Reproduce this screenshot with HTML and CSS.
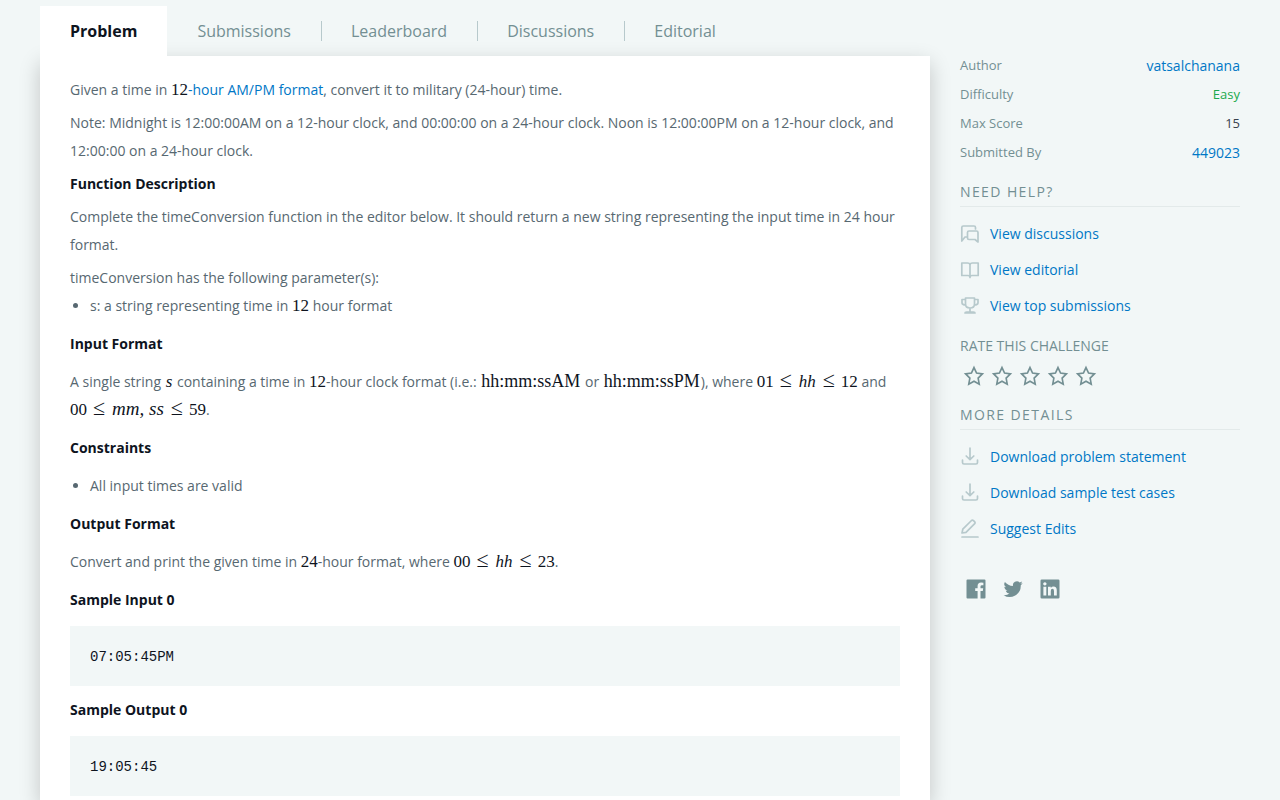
FILE: index.html
```html
<!DOCTYPE html>
<html lang="en">
<head>
<meta charset="utf-8">
<title>Time Conversion</title>
<link rel="stylesheet" href="styles.css">
</head>
<body>
<svg class="sprite" aria-hidden="true">
  <symbol id="star" viewBox="0 0 24 24"><path d="M12 2.8l2.8 6 6.4.9-4.7 4.6 1.2 6.6-5.7-3.2-5.7 3.2 1.2-6.6L2.800 9.700l6.400-.9z"/></symbol>
  <symbol id="download" viewBox="0 0 20 20"><path d="M10 1v11.500M6.200 9l3.800 3.600L13.800 9M2.500 13v2.500q0 1.500 1.500 1.500h12q1.500 0 1.500-1.500V13"/></symbol>
</svg>
<div class="page">
  <main class="challenge">
    <nav class="tabs">
      <a class="tab active" href="#">Problem</a>
      <a class="tab" href="#"><span>Submissions</span></a>
      <a class="tab" href="#"><span>Leaderboard</span></a>
      <a class="tab" href="#"><span>Discussions</span></a>
      <a class="tab" href="#"><span>Editorial</span></a>
    </nav>
    <article class="card">
      <section class="statement">
        <p>Given a time in <a href="#"><span class="math">12</span>-hour AM/PM format</a>, convert it to military (24-hour) time.</p>
        <p>Note: Midnight is 12:00:00AM on a 12-hour clock, and 00:00:00 on a 24-hour clock. Noon is 12:00:00PM on a 12-hour clock, and 12:00:00 on a 24-hour clock.</p>
        <h2>Function Description</h2>
        <p>Complete the timeConversion function in the editor below. It should return a new string representing the input time in 24 hour format.</p>
        <div>
          <p>timeConversion has the following parameter(s):</p>
          <ul><li>s: a string representing time in <span class="math">12</span> hour format</li></ul>
        </div>
      </section>
      <h2>Input Format</h2>
      <p>A single string <span class="math"><i>s</i></span> containing a time in <span class="math">12</span>-hour clock format (i.e.: <span class="math word">hh:mm:ssAM</span> or <span class="math word">hh:mm:ssPM</span>), where <span class="math">01<span class="rel">≤</span><i>hh</i><span class="rel">≤</span>12</span> and <span class="math">00<span class="rel">≤</span><i class="wide">mm, ss</i><span class="rel">≤</span>59</span>.</p>
      <h2>Constraints</h2>
      <ul><li>All input times are valid</li></ul>
      <h2>Output Format</h2>
      <p>Convert and print the given time in <span class="math">24</span>-hour format, where <span class="math">00<span class="rel">≤</span><i>hh</i><span class="rel">≤</span>23</span>.</p>
      <h2>Sample Input 0</h2>
      <pre>07:05:45PM</pre>
      <h2>Sample Output 0</h2>
      <pre>19:05:45</pre>
    </article>
  </main>
  <aside class="sidebar">
    <dl class="facts">
      <div><dt>Author</dt><dd><a href="#">vatsalchanana</a></dd></div>
      <div><dt>Difficulty</dt><dd class="easy">Easy</dd></div>
      <div><dt>Max Score</dt><dd>15</dd></div>
      <div><dt>Submitted By</dt><dd><a href="#">449023</a></dd></div>
    </dl>
    <h3>NEED HELP?</h3>
    <ul class="links">
      <li><a href="#"><svg viewBox="0 0 20 20"><path d="M7 13H5l-3.200 4V3.500Q1.800 2 3.300 2H14q1.500 0 1.500 1.500V5M9 7h7.500Q18 7 18 8.500V18l-3-2.500H9Q7.500 15.500 7.500 14V8.500Q7.500 7 9 7z"/></svg>View discussions</a></li>
      <li><a href="#"><svg viewBox="0 0 20 20"><path d="M10 5q0-2-2.500-2H1.800v12.500H8q2 0 2 2 0-2 2-2h6.200V3h-5.700Q10 3 10 5v12.500"/></svg>View editorial</a></li>
      <li><a href="#"><svg viewBox="0 0 20 20"><path d="M5.500 2h9v6q0 4-4.500 4T5.500 8zM5.500 3.500H2v3.200Q2 9 5.800 9M14.500 3.500H18v3.200Q18 9 14.200 9M10 12v4.500M5 17q0-1 1.500-1h7q1.500 0 1.500 1z"/></svg>View top submissions</a></li>
    </ul>
    <h4>RATE THIS CHALLENGE</h4>
    <div class="stars">
      <button type="button" aria-label="1 star"><svg><use href="#star"/></svg></button>
      <button type="button" aria-label="2 stars"><svg><use href="#star"/></svg></button>
      <button type="button" aria-label="3 stars"><svg><use href="#star"/></svg></button>
      <button type="button" aria-label="4 stars"><svg><use href="#star"/></svg></button>
      <button type="button" aria-label="5 stars"><svg><use href="#star"/></svg></button>
    </div>
    <h3>MORE DETAILS</h3>
    <ul class="links">
      <li><a href="#"><svg><use href="#download"/></svg>Download problem statement</a></li>
      <li><a href="#"><svg><use href="#download"/></svg>Download sample test cases</a></li>
      <li><a href="#"><svg viewBox="0 0 20 20"><path d="M2 14l.8-3.800L11.500 1.500q1-.8 2 .2l1 1q1 1 .2 2L6 13.300zM2 18h16"/></svg>Suggest Edits</a></li>
    </ul>
    <div class="social">
      <a href="#" aria-label="Facebook"><svg viewBox="0 0 20 20"><path fill-rule="evenodd" d="M1.500.500h17q1 0 1 1v17q0 1-1 1H14.500V12h2.300l.4-2.800h-2.700V7.600q0-1.300 1.400-1.300h1.500V3.700q-1-.2-2.300-.2-3.500 0-3.500 3.600v2.100H9.200V12h2.400v7.500H1.500q-1 0-1-1v-17q0-1 1-1z"/></svg></a>
      <a href="#" aria-label="Twitter"><svg viewBox="0 0 24 24"><path d="M23.600 4.900c-.8.4-1.800.6-2.700.8 1-.6 1.700-1.500 2.100-2.600-.9.500-1.900.9-3 1.100a4.700 4.700 0 0 0-8 4.300C8 8.300 4.600 6.400 2.300 3.600a4.700 4.700 0 0 0 1.400 6.300c-.8 0-1.500-.2-2.100-.6v.1c0 2.300 1.600 4.200 3.800 4.600-.7.200-1.400.2-2.100.1.600 1.900 2.300 3.200 4.400 3.300a9.500 9.500 0 0 1-7 2A13.400 13.400 0 0 0 21.300 7.400c.9-.7 1.700-1.500 2.300-2.500z"/></svg></a>
      <a href="#" aria-label="LinkedIn"><svg viewBox="0 0 20 20"><path fill-rule="evenodd" d="M1.800.500h16.400q1.300 0 1.300 1.300v16.400q0 1.300-1.300 1.300H1.800Q.500 19.500.500 18.200V1.800Q.500.500 1.800.500zM3.400 7.700v8.900h2.900V7.700zM4.850 3.200a1.650 1.650 0 1 0 .01 0zM8 7.700v8.900h2.800V12q0-2.200 1.600-2.200T14 12v4.600h2.800v-5.200q0-3.900-3.300-3.900-1.800 0-2.700 1.400V7.700z"/></svg></a>
    </div>
  </aside>
</div>
</body>
</html>
```
FILE: styles.css
```css
* { box-sizing: border-box; }
body {
  margin: 0;
  background: #f2f7f7;
  color: #576871;
  font: 14px/28px "Open Sans", sans-serif;
}
h2, h3, h4, p, ul, dl, dd, pre { margin: 0; padding: 0; }
a { color: #0077c6; text-decoration: none; }
.sprite { display: none; }

.page {
  display: flex;
  align-items: flex-start;
  gap: 30px;
  padding: 0 40px;
}
.challenge { flex: 1; min-width: 0; }

.tabs {
  display: flex;
  padding-top: 6px;
  font-size: 16px;
  line-height: 20px;
}
.tab {
  padding: 15px 0;
  color: #738f93;
}
.tab span { display: block; padding: 0 30px 0 29px; }
.tab + .tab:not(:last-child) span { border-right: 1px solid #b7c9cc; }
.tab.active {
  position: relative;
  z-index: 1;
  margin-right: 1px;
  padding: 15px 30px;
  background: #fff;
  color: #0e141e;
  font-weight: 700;
}

.card {
  display: flex;
  flex-direction: column;
  gap: 10px;
  min-height: 90vh;
  padding: 20px 30px 4px;
  background: #fff;
  box-shadow: 0 7px 20px rgba(0, 0, 0, 0.2);
}
.statement { display: flex; flex-direction: column; gap: 5px; }
h2 { color: #0e141e; font-size: 14px; font-weight: 700; }
.card ul { padding-left: 20px; }
.math {
  color: #0e141e;
  font: 17px/20px "Liberation Serif", serif;
}
.math i { margin: 0 1px; }
.word { padding: 0 1px; font-size: 18px; }
.math .wide { font-size: 19px; }
.rel { margin: 0 6px; font-size: 22px; line-height: 20px; }
pre {
  margin-top: 2px;
  padding: 21px 20px 19px;
  background: #f2f7f7;
  color: #0e141e;
  font: 14px/20px "Liberation Mono", monospace;
}

.sidebar { width: 280px; padding-top: 51px; }
.facts div {
  display: flex;
  justify-content: space-between;
  line-height: 29px;
}
.facts dt { color: #738f93; font-size: 13px; }
.facts dd { color: #39424e; font-size: 13px; }
.facts dd a { display: block; font-size: 14px; }
.facts .easy { color: #1ba94c; }
h3, h4 {
  color: #738f93;
  font-size: 14px;
  font-weight: 400;
  line-height: 20px;
}
h3 {
  margin-top: 15px;
  padding-bottom: 4px;
  border-bottom: 1px solid #e3eaea;
  letter-spacing: 1.4px;
}
.links {
  display: grid;
  gap: 16px;
  padding: 17px 0 20px;
  list-style: none;
  line-height: 20px;
}
.links a { display: flex; gap: 10px; }
.links svg {
  width: 20px;
  height: 20px;
  fill: none;
  stroke: #b7c9cc;
  stroke-width: 1.7;
  stroke-linecap: round;
  stroke-linejoin: round;
}
.stars { display: flex; padding: 6px 0 0; }
.stars button {
  display: flex;
  padding: 2px;
  border: 0;
  background: none;
}
.stars svg {
  width: 24px;
  height: 24px;
  padding: 1px;
  fill: none;
  stroke: #738f93;
  stroke-width: 1.8;
}
.social { display: flex; gap: 17px; padding: 20px 6px; }
.social a { display: flex; }
.social svg { width: 20px; height: 20px; fill: #738f93; }
```
